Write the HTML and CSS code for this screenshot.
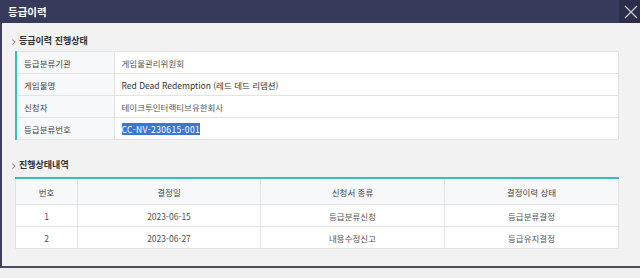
FILE: index.html
```html
<!DOCTYPE html>
<html lang="ko">
<head>
    <meta charset="UTF-8">
    <meta name="viewport" content="width=device-width, initial-scale=1.0">
    <title>등급이력</title>
    <link rel="stylesheet" href="styles.css">
</head>
<body>
    <div class="modal">
        <div class="modal-header">
            <h1>등급이력</h1>
            <button type="button" class="close-btn" aria-label="닫기">
                <svg width="14" height="14" viewBox="0 0 14 14"><path d="M1 1 L13 13 M13 1 L1 13" stroke="#c9cad6" stroke-width="1.2" fill="none"/></svg>
            </button>
        </div>
        <div class="modal-body">
            <h2 class="section-title">등급이력 진행상태</h2>
            <table class="info-table">
                <colgroup><col class="col-label"><col></colgroup>
                <tr><th>등급분류기관</th><td>게임물관리위원회</td></tr>
                <tr><th>게임물명</th><td class="dark">Red Dead Redemption (레드 데드 리뎀션)</td></tr>
                <tr><th>신청자</th><td>테이크투인터랙티브유한회사</td></tr>
                <tr><th>등급분류번호</th><td><span class="selected">CC-NV-230615-001</span></td></tr>
            </table>

            <h2 class="section-title second">진행상태내역</h2>
            <table class="list-table">
                <colgroup>
                    <col class="col-no">
                    <col class="col-date">
                    <col class="col-type">
                    <col>
                </colgroup>
                <thead>
                    <tr><th>번호</th><th>결정일</th><th>신청서 종류</th><th>결정이력 상태</th></tr>
                </thead>
                <tbody>
                    <tr><td>1</td><td>2023-06-15</td><td>등급분류신청</td><td>등급분류결정</td></tr>
                    <tr><td>2</td><td>2023-06-27</td><td>내용수정신고</td><td>등급유지결정</td></tr>
                </tbody>
            </table>
        </div>
    </div>
</body>
</html>
```

FILE: styles.css
```css
body {
    margin: 0;
    padding: 0;
    background-color: #efeff0;
    font-family: "Noto Sans CJK KR", "Noto Sans", sans-serif;
    overflow: hidden;
}
.modal {
    width: 660px;
    background-color: #f2f2f2;
    border-left: 2px solid #3d4057;
    border-bottom: 2px solid #4b4d62;
}
.modal-header {
    height: 23px;
    margin-left: -2px;
    background-color: #363a5b;
    display: flex;
    align-items: center;
    justify-content: space-between;
}
.modal-header h1 {
    margin: 0 0 0 8px;
    color: #fff;
    font-size: 10.5px;
    font-weight: bold;
    line-height: 23px;
}
.close-btn {
    width: 23px;
    height: 23px;
    margin-right: 20px;
    padding: 0;
    border: none;
    background-color: #2b2e48;
    display: flex;
    align-items: center;
    justify-content: center;
}
.modal-body {
    padding: 12px 0 17px 13px;
    width: 612px;
}
.section-title {
    margin: 0 0 4px 0;
    font-size: 9px;
    font-weight: bold;
    color: #333;
    line-height: 12px;
    position: relative;
    padding-left: 4px;
}
.section-title::before {
    content: "";
    position: absolute;
    left: -4px;
    top: 4.5px;
    width: 2.5px;
    height: 2.5px;
    border-top: 1px solid #888;
    border-right: 1px solid #888;
    transform: rotate(45deg);
}
.section-title.second {
    margin-top: 19px;
    margin-bottom: 6px;
}
table {
    width: 604px;
    table-layout: fixed;
    border-collapse: collapse;
    font-size: 8.5px;
    color: #555;
}
.info-table {
    border-left: 2px solid #35bfb6;
}
.col-label {
    width: 98px;
}
.info-table th,
.info-table td {
    height: 21px;
    border: 1px solid #e3e3e3;
    text-align: left;
    font-weight: normal;
    padding: 0 0 0 7px;
}
.info-table th {
    background-color: #f7f8fa;
    color: #444;
}
.info-table td {
    background-color: #fff;
}
.info-table td.dark {
    color: #333;
}
.selected {
    background-color: #3877d6;
    color: #fff;
    letter-spacing: 0.35px;
}
.list-table {
    border-top: 2px solid #35bfb6;
}
.list-table th,
.list-table td {
    border: 1px solid #e3e3e3;
    text-align: center;
    font-weight: normal;
    padding: 0;
}
.list-table th {
    height: 25px;
    background-color: #f7f8fa;
    color: #444;
}
.list-table td {
    height: 21px;
    background-color: #fff;
}
.col-no {
    width: 62px;
}
.col-date {
    width: 183px;
}
.col-type {
    width: 184px;
}
```
